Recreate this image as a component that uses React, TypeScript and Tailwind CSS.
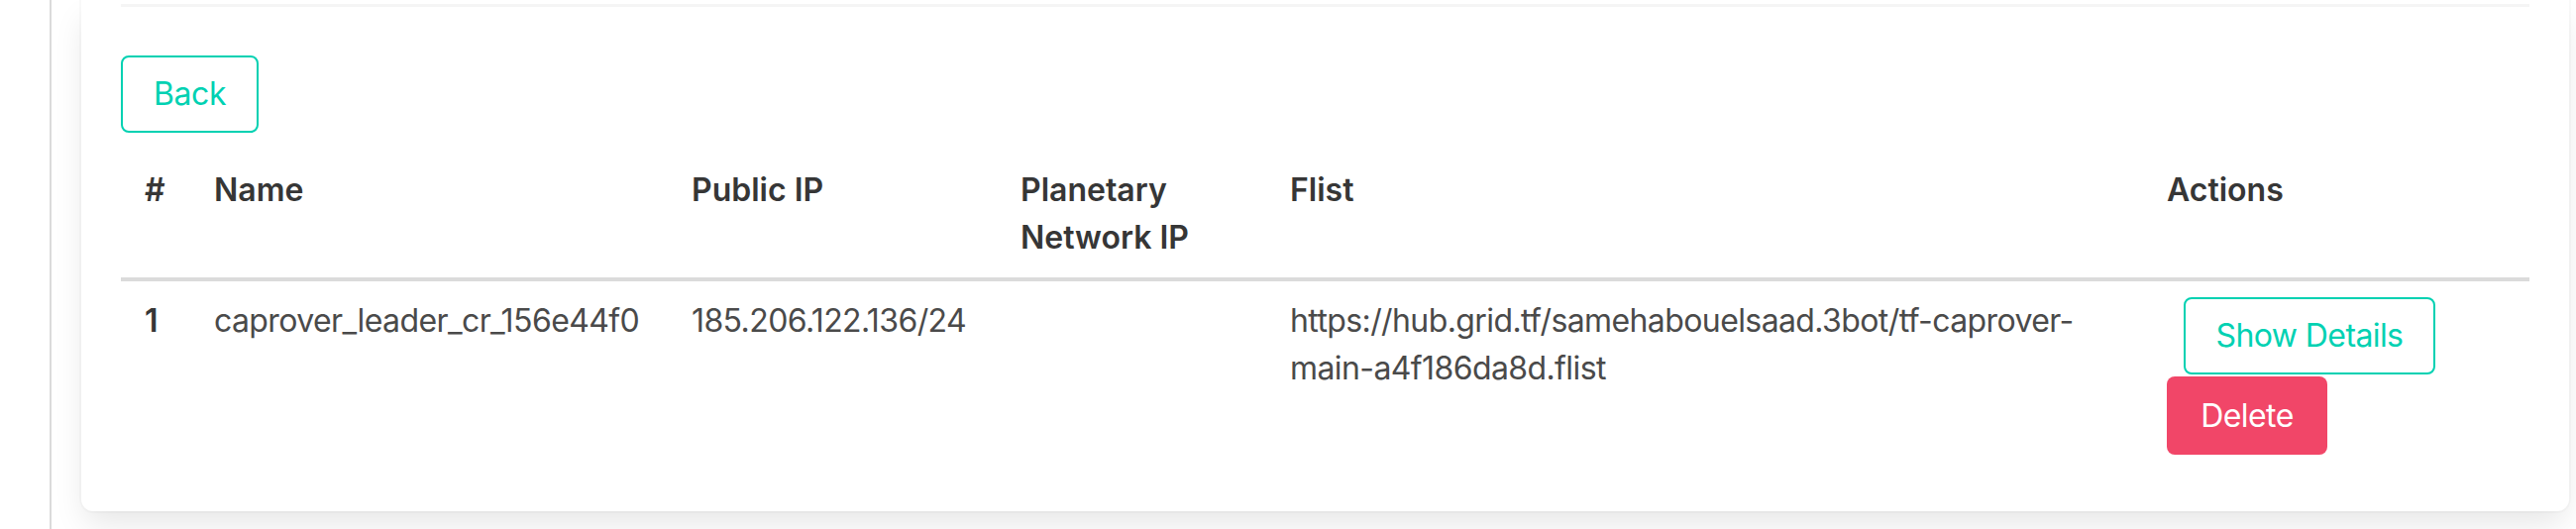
import React from 'react';

interface Deployment {
  id: number;
  name: string;
  publicIp: string;
  planetaryIp: string;
  flist: [string, string];
}

const deployments: Deployment[] = [
  {
    id: 1,
    name: 'caprover_leader_cr_156e44f0',
    publicIp: '185.206.122.136/24',
    planetaryIp: '',
    flist: ['https://hub.grid.tf/samehabouelsaad.3bot/tf-caprover-', 'main-a4f186da8d.flist'],
  },
];

const th = 'px-[24px] pt-[16px] pb-[16px] text-left align-top font-semibold text-[#363636]';
const td = 'px-[24px] py-[16px] align-top text-[#4a4a4a] tracking-[-0.6px]';

export default function App() {
  return (
    <div className="flex h-[534px] overflow-hidden bg-white font-[Inter,'Liberation_Sans',sans-serif] text-[32px] leading-[48px]">
      <div className="w-[52px] shrink-0 border-r-2 border-[#dbdbdb]" />

      <div className="flex-1 pl-[30px] pr-[8px]">
        <div className="rounded-b-[12px] bg-white px-[40px] pt-[4px] pb-[41px] shadow-[0_16px_32px_-4px_rgba(10,10,10,0.1),0_0_0_2px_rgba(10,10,10,0.02)]">
          <div className="h-[3px] bg-[#f5f5f5]" />

          <button className="mt-[49px] flex h-[78px] w-[139px] items-center justify-center rounded-[8px] border-2 border-[#00d1b2] bg-white text-[#00d1b2] tracking-[-0.4px]">
            Back
          </button>

          {/* Deployments table */}
          <table className="mt-[18px] w-full table-fixed border-collapse">
            <colgroup>
              <col className="w-[70px]" />
              <col className="w-[482px]" />
              <col className="w-[332px]" />
              <col className="w-[272px]" />
              <col className="w-[885px]" />
              <col className="w-[390px]" />
            </colgroup>
            <thead>
              <tr className="border-b-4 border-[#dbdbdb]">
                <th className={th}>#</th>
                <th className={th}>Name</th>
                <th className={th}>Public IP</th>
                <th className={th}>Planetary Network IP</th>
                <th className={th}>Flist</th>
                <th className={th}>Actions</th>
              </tr>
            </thead>
            <tbody>
              {deployments.map((d) => (
                <tr key={d.id}>
                  <th className={th}>{d.id}</th>
                  <td className={td}>{d.name}</td>
                  <td className={td}>{d.publicIp}</td>
                  <td className={td}>{d.planetaryIp}</td>
                  <td className={td}>
                    {d.flist[0]}
                    <br />
                    {d.flist[1]}
                  </td>
                  <td className={td}>
                    <div className="flex flex-col items-start">
                      <button className="ml-[17px] flex h-[78px] w-[254px] items-center justify-center rounded-[8px] border-2 border-[#00d1b2] bg-white text-[#00d1b2]">
                        Show Details
                      </button>
                      <button className="mt-[2px] flex h-[79px] w-[162px] items-center justify-center rounded-[8px] bg-[#f14668] text-white">
                        Delete
                      </button>
                    </div>
                  </td>
                </tr>
              ))}
            </tbody>
          </table>
        </div>
      </div>
    </div>
  );
}
